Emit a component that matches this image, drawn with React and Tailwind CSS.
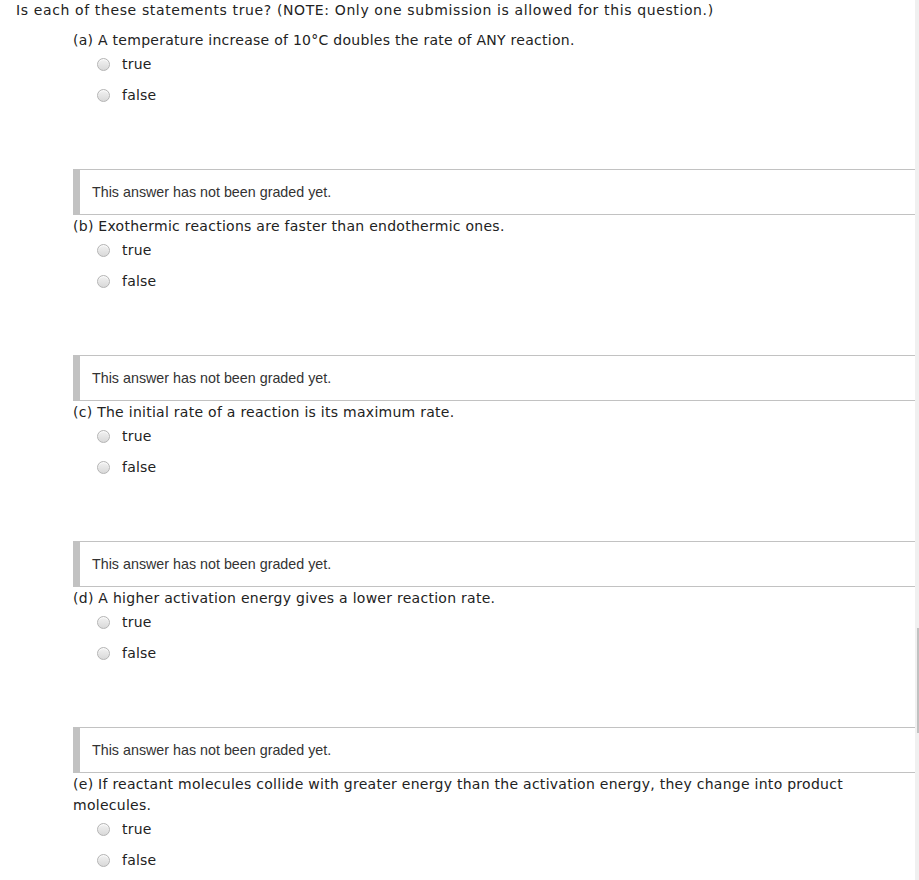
import React from 'react';

const questions = [
  { id: 'a', text: 'A temperature increase of 10°C doubles the rate of ANY reaction.' },
  { id: 'b', text: 'Exothermic reactions are faster than endothermic ones.' },
  { id: 'c', text: 'The initial rate of a reaction is its maximum rate.' },
  { id: 'd', text: 'A higher activation energy gives a lower reaction rate.' },
  {
    id: 'e',
    text: 'If reactant molecules collide with greater energy than the activation energy, they change into product molecules.',
  },
];

const Radio = ({ label }) => (
  <label className="flex h-[24px] items-center">
    <span className="ml-[24px] block h-[13px] w-[13px] rounded-full border border-[#b4b4b4] bg-gradient-to-b from-[#f2f2f2] to-[#d9d9d9] shadow-[inset_0_1px_1px_rgba(255,255,255,0.8)]" />
    <span className="ml-[12px] text-[14px] leading-[20px] tracking-[0.2px] text-[#222]">{label}</span>
  </label>
);

const Question = ({ id, text }) => (
  <div>
    <p className="pt-[1px] text-[14px] leading-[21px] tracking-[0.27px] text-[#222]">
      ({id}) {text}
    </p>
    <div className="mt-[1px] flex flex-col gap-[7px]">
      <Radio label="true" />
      <Radio label="false" />
    </div>
    <div className="mt-[62px] flex h-[46px] items-center border-y border-l-[7px] border-[#c2c2c2] bg-white pl-[12px] pt-[2px]">
      <span className="font-['Liberation_Sans',Arial,sans-serif] text-[14.3px] text-[#333]">
        This answer has not been graded yet.
      </span>
    </div>
  </div>
);

export default function App() {
  return (
    <div className="flex h-[880px] w-[919px] overflow-hidden bg-white font-['DejaVu_Sans',Verdana,sans-serif]">
      <div className="w-[915px] shrink-0">
        <p className="pl-[16px] text-[14px] leading-[20px] tracking-[0.62px] text-[#222]">
          Is each of these statements true? (NOTE: Only one submission is allowed for this question.)
        </p>
        <div className="ml-[73px] mt-[9px]">
          {questions.map((q) => (
            <Question key={q.id} {...q} />
          ))}
        </div>
      </div>
      <div className="flex w-[4px] shrink-0 flex-col bg-[#f0f0f0]">
        <div className="ml-[2px] mt-[628px] h-[105px] w-[2px] bg-[#c1c1c1]" />
      </div>
    </div>
  );
}
